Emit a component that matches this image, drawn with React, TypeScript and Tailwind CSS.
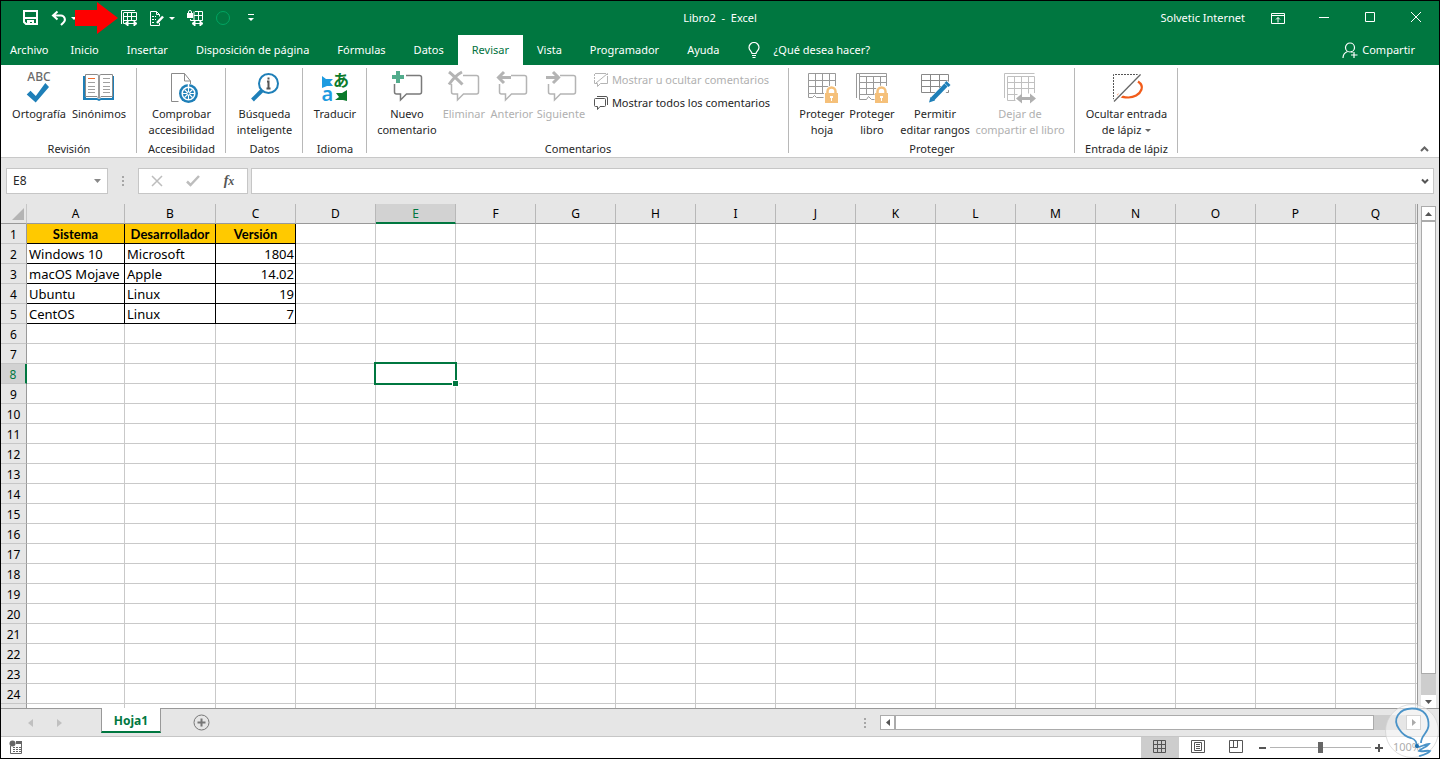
import React, { useState } from "react";

const tabs = ["Inicio", "Insertar", "Disposición de página", "Fórmulas", "Datos", "Revisar", "Vista", "Programador", "Ayuda"];

const columns = "ABCDEFGHIJKLMNOPQR".split("");
const rowCount = 25;

const sheet: string[][] = [
  ["Sistema", "Desarrollador", "Versión"],
  ["Windows 10", "Microsoft", "1804"],
  ["macOS Mojave", "Apple", "14.02"],
  ["Ubuntu", "Linux", "19"],
  ["CentOS", "Linux", "7"],
];

type IconProps = { children: React.ReactNode; className?: string; box?: string };

const Svg = ({ children, className = "w-4 h-4", box = "0 0 16 16" }: IconProps) => (
  <svg className={`shrink-0 ${className}`} viewBox={box} fill="none" aria-hidden="true">
    {children}
  </svg>
);

const Big = ({ children }: { children: React.ReactNode }) => (
  <Svg className="w-8 h-8 overflow-visible" box="0 0 32 32">{children}</Svg>
);

const Caret = ({ className = "" }: { className?: string }) => (
  <Svg className={`w-[6px] h-[3px] ${className}`} box="0 0 6 3">
    <path d="M0 0h6L3 3z" fill="currentColor" />
  </Svg>
);

/* ── Ribbon icons ── */

const SpellIcon = () => (
  <Big>
    <text x="16" y="9" textAnchor="middle" fontSize="12" fontWeight="500" fill="#6a6a6a" fontFamily="Noto Sans, sans-serif">ABC</text>
    <path d="M3.700 22.500 7.500 18.700 12.800 24 22.300 11 26 15 12.700 30.500z" fill="#1e7fb8" />
  </Big>
);

const ThesaurusIcon = () => (
  <Big>
    <path d="M0 4h3v22h11l2 1 2-1h11V4h2v24H18l-2 1-2-1H0z" fill="#1e7fb8" />
    <path d="M2.500 2.500H14l2 1 2-1h11.500v22H18l-2 2-2-2H2.500z" fill="#fff" stroke="#8a8a8a" />
    <path d="M16 4v22" stroke="#9a9a9a" strokeWidth="2" />
    <path d="M5 6.500h7" stroke="#f06a2a" />
    <path d="M5 10.500h7M5 14.500h7M5 17.500h7M5 20.500h7M20 6.500h7M20 10.500h7M20 14.500h7M20 17.500h7M20 20.500h7" stroke="#a0a0a0" />
  </Big>
);

const AccessibilityIcon = () => (
  <Big>
    <path d="M12.500 29.500h-7v-28h13l6 7.500v3M18.500 1.500V9h6" stroke="#8a8a8a" />
    <circle cx="22.500" cy="21.500" r="9.500" fill="#1e7fb8" />
    <circle cx="22.500" cy="21.500" r="6.300" stroke="#fff" strokeWidth="1.500" />
    <path d="M22.500 16v12M16.500 21.500h12M18.500 17.500l8 8M26.500 17.500l-8 8" stroke="#fff" strokeWidth="1.100" />
    <path d="M22.500 12v3" stroke="#fff" strokeWidth="1.500" />
    <circle cx="22.500" cy="21.500" r="1.500" fill="#1e7fb8" stroke="#fff" />
  </Big>
);

const LookupIcon = () => (
  <Big>
    <path d="M3.500 28 13 18.500" stroke="#1e7fb8" strokeWidth="4" />
    <circle cx="19.500" cy="11.500" r="9.500" fill="#fff" stroke="#1e7fb8" strokeWidth="2" />
    <path d="M19.500 5.500v2M18 9.500h1.500v7M17.500 16.500h4" stroke="#555" strokeWidth="2" />
  </Big>
);

const TranslateIcon = () => (
  <Big>
    <path d="M3 4l4 3h7l-3 3 3 4H8l-5 2z" fill="#1e9be0" />
    <path d="M28 29l-4-1h-8l4-3-3-4h6l5-3z" fill="#0b7a2b" />
    <text x="14" y="14" fontSize="16" fontWeight="700" fill="#0b7a2b" fontFamily="Noto Sans CJK JP, sans-serif">あ</text>
    <text x="2.500" y="29" fontSize="20" fontWeight="600" fill="#1e9be0" fontFamily="Noto Sans, sans-serif">a</text>
  </Big>
);

const Bubble = ({ stroke }: { stroke: string }) => (
  <path d="M15 3.500h13.500a2 2 0 0 1 2 2V20a2 2 0 0 1-2 2H15.500l-6 6v-6H5.500a2 2 0 0 1-2-2V12" stroke={stroke} strokeWidth="1.500" />
);

const NewCommentIcon = () => (
  <Big>
    <Bubble stroke="#7a7a7a" />
    <path d="M5 -1h4v4h4v4H9v4H5V7H1V3h4z" fill="#52ac8c" />
  </Big>
);

const DeleteCommentIcon = () => (
  <Big>
    <Bubble stroke="#b4b4b4" />
    <path d="M1 0C5 3 10 8 14.500 12.500M14 0C8 3 4 8 1 12.500" stroke="#b4b4b4" strokeWidth="3" />
  </Big>
);

const PrevCommentIcon = () => (
  <Big>
    <Bubble stroke="#b4b4b4" />
    <path d="M2 5.500h13M8 0 2.500 5.500 8 11" stroke="#b4b4b4" strokeWidth="3" />
  </Big>
);

const NextCommentIcon = () => (
  <Big>
    <Bubble stroke="#b4b4b4" />
    <path d="M1 5.500h13M8 0l5.500 5.500L8 11" stroke="#b4b4b4" strokeWidth="3" />
  </Big>
);

const Lock = () => (
  <>
    <path d="M21.500 22v-2a4 4 0 0 1 8 0v2" stroke="#fff" strokeWidth="5" />
    <path d="M21.500 23v-3.500a4 4 0 0 1 8 0V23" stroke="#f5c07a" strokeWidth="2.500" />
    <path d="M19 21h13v10H19z" fill="#f5c07a" />
    <path d="M24 24h3v2h-1v3h-1v-3h-1z" fill="#fff" />
  </>
);

const ProtectSheetIcon = () => (
  <Big>
    <path d="M18 21.500H2.500v-20h27V14M2.500 8.500h27M2.500 14.500h20M9.500 1.500v20M16.500 1.500v20M23.500 1.500V14M2.500 21.500v4h4l2-2 2 2h7" stroke="#999" />
    <Lock />
  </Big>
);

const ProtectBookIcon = () => (
  <Big>
    <path d="M.500 26V1.500M3.500 1.500h27V14M.500 1.500h3M3.500 4.500h27M3.500 10.500h27M3.500 16.500h18M3.500 22.500h15M3.500 1.500v26h7l2-3 3 3h3M10.500 4.500v18M17.500 4.500v18M24.500 4.500v10" stroke="#999" />
    <Lock />
  </Big>
);

const EditRangesIcon = () => (
  <Big>
    <path d="M2.500 2.500h27v18h-27zM2.500 8.500h27M2.500 14.500h27M11.500 2.500v18M20.500 2.500v18" stroke="#888" />
    <path d="M12 30 31 11" stroke="#fff" strokeWidth="8" />
    <path d="M13.500 27 27 13" stroke="#1e7fb8" strokeWidth="4.500" />
    <path d="M27.500 9l4 4-2 2-4-4z" fill="#1e7fb8" />
    <path d="M11.500 25 10 30.500l6-2z" fill="#1e7fb8" />
  </Big>
);

const UnshareIcon = () => (
  <Big>
    <path d="M.500 26V1.500h30M3.500 4.500h27V21M3.500 10.500h27M3.500 16.500h27M3.500 22.500h10M3.500 4.500v24h8M10.500 4.500v24M17.500 4.500v18M24.500 4.500v17" stroke="#c0c0c0" />
    <path d="M12 26.500l6-5v3.500h8v-3.500l6 5-6 5V28h-8v3.500z" fill="#b0b0b0" />
  </Big>
);

const InkIcon = () => (
  <Big>
    <path d="M2.500 28V2.500h27" stroke="#555" strokeDasharray="2 1" />
    <path d="M27 9.500c3 2 4.500 5 3.500 8-2 5.500-8 8-13 8-4.500 0-8-1-11-3" stroke="#f25c1a" strokeWidth="2.200" />
    <path d="M29.500 2.500 3 29.500" stroke="#fff" strokeWidth="4" />
    <path d="M29.500 2.500 3 29.500" stroke="#666" strokeWidth="1.300" />
  </Big>
);

/* ── Ribbon building blocks ── */

type RibbonButtonProps = {
  icon: React.ReactNode;
  lines: string[];
  width: string;
  disabled?: boolean;
  caret?: boolean;
};

const RibbonButton = ({ icon, lines, width, disabled, caret }: RibbonButtonProps) => (
  <button type="button" disabled={disabled}
    className={`flex flex-col items-center leading-4 whitespace-nowrap ${width} ${disabled ? "text-[#b0b0b0]" : "text-[#262626]"}`}>
    {icon}
    <span className="mt-0.5">{lines[0]}</span>
    {lines[1] && (
      <span className="flex items-center gap-1">
        {lines[1]}
        {caret && <Caret className="text-[#666]" />}
      </span>
    )}
  </button>
);

const Group = ({ label, width, children }: { label: string; width: string; children: React.ReactNode }) => (
  <section aria-label={label} className={`relative flex flex-col justify-between shrink-0 ${width}`}>
    <div className="flex items-start justify-center">{children}</div>
    <h2 className="text-center leading-4 text-[#262626]">{label}</h2>
    <div className="absolute right-0 -top-1 bottom-1 w-px bg-[#b8b8b8]" />
  </section>
);

const TitleBar = () => (
  <div className="relative grid grid-cols-[1fr_auto_1fr] items-center h-[34px]">
    <div className="flex items-center gap-3 pl-[22px]">
      <button type="button" aria-label="Guardar">
        <Svg>
          <path d="M1 1h13v13H3l-2-2z" stroke="#fff" strokeWidth="2" />
          <path d="M2 7h11v2H2zM4 10h7v4H9v-2H7v2H4z" fill="#fff" />
        </Svg>
      </button>
      <div className="relative flex items-center gap-1">
        <button type="button" aria-label="Deshacer">
          <Svg>
            <path d="M6.500 1.500 2 5.500l4.500 4M2.500 5.500H10a4 4 0 0 1 2.500 7L10 15" stroke="#fff" strokeWidth="2" />
          </Svg>
        </button>
        <Caret />
        <svg className="absolute left-6 -top-2 w-[43px] h-8" viewBox="0 0 43 32" aria-hidden="true">
          <path d="M0 8h22V0l21 16-21 16v-8H0z" fill="#fe0000" />
        </svg>
      </div>
      <button type="button" aria-label="Dejar de compartir el libro" className="ml-8">
        <Svg>
          <path d="M.500 14V.500H14M3 2.500h12.500v8M2.500 2.500v11H4M3 6.500h12M3 10.500h12M6.500 2.500v8M10.500 2.500v8" stroke="#fff" />
          <path d="M4 13.500l3-2.500v5zM16 13.500 13 11v5zM6 13.500h8" fill="#fff" stroke="#fff" />
        </Svg>
      </button>
      <div className="flex items-center gap-1">
        <button type="button" aria-label="Permitir editar rangos">
          <Svg>
            <path d="M10.500 13v2.500h-9v-14h6l3 3v2M7.500 1.500v3h3" stroke="#fff" />
            <path d="M3 6.500h4M3 9.500h4M3 12.500h3" stroke="#fff" strokeDasharray="2 1" />
            <path d="M8 13 14 6.500" stroke="#fff" strokeWidth="2.500" />
          </Svg>
        </button>
        <Caret />
      </div>
      <button type="button" aria-label="Proteger y compartir">
        <Svg>
          <path d="M8 1.500h7.500v9H3.500V9M7 5.500h8M7 1.500v9M11.500 1.500v9" stroke="#fff" />
          <path d="M0 3h6v5H0z" fill="#fff" />
          <path d="M1.500 3.500V2a1.500 1.500 0 0 1 3 0v1.500" stroke="#fff" />
          <path d="M5 13.500l3-2.500v5zM16 13.500 13 11v5zM7 13.500h7" fill="#fff" stroke="#fff" />
        </Svg>
      </button>
      <button type="button" aria-label="Grabar macro">
        <Svg><circle cx="8" cy="8" r="6.500" stroke="#00a562" /></Svg>
      </button>
      <button type="button" aria-label="Personalizar barra" className="ml-1">
        <Svg className="w-2 h-2" box="0 0 8 8">
          <path d="M1 .500h6" stroke="#fff" />
          <path d="M1 4h6L4 7z" fill="#fff" />
        </Svg>
      </button>
    </div>
    <h1>Libro2&nbsp; - &nbsp;Excel</h1>
    <div className="flex items-center justify-end h-full">
      <button type="button" className="mr-2.5 whitespace-nowrap">Solvetic Internet</button>
      <button type="button" aria-label="Opciones de la cinta" className="flex justify-center w-[46px]">
        <Svg className="w-[14px] h-[11px]" box="0 0 14 11">
          <path d="M.500.500h13v10H.500zM.500 2.500h13M7 9.500v-5M5 6.500l2-2 2 2" stroke="#fff" />
        </Svg>
      </button>
      <button type="button" aria-label="Minimizar" className="flex justify-center w-[46px]">
        <Svg className="w-[10px] h-[11px]" box="0 0 10 11"><path d="M0 4.500h10" stroke="#fff" /></Svg>
      </button>
      <button type="button" aria-label="Maximizar" className="flex justify-center w-[46px]">
        <Svg className="w-[10px] h-[12px]" box="0 0 10 12"><path d="M.500.500h9v9h-9z" stroke="#fff" /></Svg>
      </button>
      <button type="button" aria-label="Cerrar" className="flex justify-center w-[46px]">
        <Svg className="w-[10px] h-[12px]" box="0 0 10 12"><path d="M0 0l10 10M10 0 0 10" stroke="#fff" /></Svg>
      </button>
    </div>
  </div>
);

const TabBar = ({ active, onSelect }: { active: string; onSelect: (t: string) => void }) => (
  <nav className="flex items-stretch h-[30px]">
    <button type="button" className="pl-[9px] pr-2">Archivo</button>
    {tabs.map((t) => (
      <button key={t} type="button" onClick={() => onSelect(t)}
        className={`px-[14px] whitespace-nowrap ${t === active ? "bg-white text-[#00723e]" : ""}`}>
        {t}
      </button>
    ))}
    <button type="button" className="flex items-center gap-[14px] pl-[14px]">
      <Svg className="w-3 h-4" box="0 0 12 16">
        <path d="M4 11.500c0-2-3-3-3-6a5 5 0 0 1 10 0c0 3-3 4-3 6zM4 13.500h4M4.500 15.500h3" stroke="#fff" strokeWidth="1.200" />
      </Svg>
      ¿Qué desea hacer?
    </button>
    <button type="button" className="flex items-center gap-1 ml-auto pr-6">
      <Svg>
        <circle cx="8" cy="5.500" r="4.500" stroke="#fff" strokeWidth="1.200" />
        <path d="M1 16c0-3 2-5.500 4.500-6.500M9 9.500l1.500 1M12 10v6M9 13h6.500" stroke="#fff" strokeWidth="1.200" />
      </Svg>
      Compartir
    </button>
  </nav>
);

const Ribbon = () => (
  <div className="flex h-[93px] pt-[7px] border-b border-[#c8c8c8] bg-white">
    <Group label="Revisión" width="w-[136px]">
      <RibbonButton icon={<SpellIcon />} lines={["Ortografía"]} width="w-[60px]" />
      <RibbonButton icon={<ThesaurusIcon />} lines={["Sinónimos"]} width="w-[60px]" />
    </Group>
    <Group label="Accesibilidad" width="w-[89px]">
      <RibbonButton icon={<AccessibilityIcon />} lines={["Comprobar", "accesibilidad"]} width="w-[72px]" />
    </Group>
    <Group label="Datos" width="w-[77px]">
      <RibbonButton icon={<LookupIcon />} lines={["Búsqueda", "inteligente"]} width="w-[60px]" />
    </Group>
    <Group label="Idioma" width="w-[64px]">
      <RibbonButton icon={<TranslateIcon />} lines={["Traducir"]} width="w-[50px]" />
    </Group>
    <Group label="Comentarios" width="w-[422px]">
      <RibbonButton icon={<NewCommentIcon />} lines={["Nuevo", "comentario"]} width="w-[66px]" />
      <RibbonButton icon={<DeleteCommentIcon />} lines={["Eliminar"]} width="w-12" disabled />
      <RibbonButton icon={<PrevCommentIcon />} lines={["Anterior"]} width="w-12" disabled />
      <RibbonButton icon={<NextCommentIcon />} lines={["Siguiente"]} width="w-[50px]" disabled />
      <div className="flex flex-col gap-[7px] pl-2 pr-3">
        <button type="button" disabled className="flex items-center gap-1 leading-4 text-[#b0b0b0] whitespace-nowrap">
          <Svg className="w-[14px] h-[14px]" box="0 0 14 14">
            <path d="M.500 9V.500h13v3M3 .500h8" stroke="#b4b4b4" strokeDasharray="2 1" />
            <path d="M13.500 3v7.500h-7l-3 3v-3h-3V9M2 10 13 1" stroke="#b4b4b4" />
          </Svg>
          Mostrar u ocultar comentarios
        </button>
        <button type="button" className="flex items-center gap-1 leading-4 text-[#262626] whitespace-nowrap">
          <Svg className="w-[14px] h-[14px]" box="0 0 14 14">
            <path d="M2 2.500h8.500a1 1 0 0 1 1 1v6a1 1 0 0 1-1 1H6l-2.500 3v-3H1.500a1 1 0 0 1-1-1v-6a1 1 0 0 1 1-1zM3 .500h9a1.500 1.500 0 0 1 1.500 1.500v7" stroke="#555" />
          </Svg>
          Mostrar todos los comentarios
        </button>
      </div>
    </Group>
    <Group label="Proteger" width="w-[286px]">
      <RibbonButton icon={<ProtectSheetIcon />} lines={["Proteger", "hoja"]} width="w-[50px]" />
      <RibbonButton icon={<ProtectBookIcon />} lines={["Proteger", "libro"]} width="w-[50px]" />
      <RibbonButton icon={<EditRangesIcon />} lines={["Permitir", "editar rangos"]} width="w-[76px]" />
      <RibbonButton icon={<UnshareIcon />} lines={["Dejar de", "compartir el libro"]} width="w-[94px]" disabled />
    </Group>
    <Group label="Entrada de lápiz" width="w-[103px]">
      <RibbonButton icon={<InkIcon />} lines={["Ocultar entrada", "de lápiz"]} width="w-[90px]" caret />
    </Group>
    <button type="button" aria-label="Contraer la cinta" className="ml-auto self-end pr-2.5 pb-1">
      <Svg className="w-[9px] h-[8px]" box="0 0 9 8">
        <path d="M1 6l3.500-3.500L8 6" stroke="#666" strokeWidth="2" />
      </Svg>
    </button>
  </div>
);

const FormulaBar = () => (
  <div className="flex items-stretch h-[46px] py-2.5 px-[5px]">
    <div className="flex items-center w-[102px] border border-[#c6c6c6] bg-white">
      <input aria-label="Cuadro de nombres" defaultValue="E8" className="min-w-0 flex-1 pl-1.5 text-[12px] outline-none" />
      <button type="button" aria-label="Ver nombres" className="pr-1.5">
        <Svg className="w-[7px] h-[4px]" box="0 0 7 4"><path d="M0 0h7L3.500 4z" fill="#888" /></Svg>
      </button>
    </div>
    <Svg className="w-[2px] h-[10px] mx-[14px] self-center" box="0 0 2 10">
      <path d="M0 0h2v2H0zM0 4h2v2H0zM0 8h2v2H0z" fill="#a6a6a6" />
    </Svg>
    <div className="flex items-center w-[110px] border border-[#c6c6c6] bg-white">
      <button type="button" aria-label="Cancelar" className="flex flex-1 justify-center">
        <Svg className="w-[12px] h-[12px]" box="0 0 12 12"><path d="M1 1l10 10M11 1 1 11" stroke="#bdbdbd" strokeWidth="1.500" /></Svg>
      </button>
      <button type="button" aria-label="Introducir" className="flex flex-1 justify-center">
        <Svg className="w-[14px] h-[12px]" box="0 0 14 12"><path d="M1 6.500 4.500 10 13 1" stroke="#bdbdbd" strokeWidth="2.500" /></Svg>
      </button>
      <button type="button" aria-label="Insertar función" className="flex-1 font-['Liberation_Serif',serif] italic font-bold text-[14px] leading-4 text-[#555]">
        f<span className="text-[12px]">x</span>
      </button>
    </div>
    <div className="flex items-center flex-1 ml-[3px] border border-[#c6c6c6] bg-white">
      <input aria-label="Barra de fórmulas" className="min-w-0 flex-1 px-1.5 outline-none" />
      <button type="button" aria-label="Expandir barra de fórmulas" className="pr-1">
        <Svg className="w-[8px] h-[7px]" box="0 0 8 7"><path d="M1 1.500 4 4.500l3-3" stroke="#555" strokeWidth="2" /></Svg>
      </button>
    </div>
  </div>
);

const Grid = () => (
  <div className="min-w-0 flex-1 overflow-hidden border-r border-[#999]">
    <table className="table-fixed w-max border-separate border-spacing-0 text-black">
      <colgroup>
        <col className="w-[26px]" />
        {columns.map((c) => (
          <col key={c} className={c === "A" ? "w-[98px]" : c === "B" ? "w-[91px]" : "w-[80px]"} />
        ))}
      </colgroup>
      <thead>
        <tr className="h-5">
          <th className="h-5 p-0 border-r border-b border-r-[#c6c6c6] border-b-[#999]">
            <svg className="ml-auto mr-[2px] w-3 h-3" viewBox="0 0 12 12" aria-label="Seleccionar todo">
              <path d="M12 0v12H0z" fill="#b4b4b4" />
            </svg>
          </th>
          {columns.map((c) => (
            <th key={c} scope="col"
              className={`h-5 p-0 pt-px align-top border-r border-r-[#b8b8b8] text-[12px] leading-[17px] font-normal ${c === "E" ? "bg-[#d2d2d2] text-[#007740] border-b-2 border-b-[#007740]" : "border-b border-b-[#999]"}`}>
              {c}
            </th>
          ))}
        </tr>
      </thead>
      <tbody>
        {Array.from({ length: rowCount }, (_, r) => (
          <tr key={r} className="h-5">
            <th scope="row"
              className={`h-5 p-0 pt-0.5 align-top border-b border-b-[#c6c6c6] text-[12px] leading-[17px] font-normal ${r === 7 ? "bg-[#d2d2d2] text-[#007740] border-r-2 border-r-[#007740]" : "border-r border-r-[#999] bg-[#e6e6e6]"}`}>
              {r + 1}
            </th>
            {columns.map((c, i) => {
              const value = sheet[r]?.[i];
              const selected = r === 7 && c === "E";
              const filled = value !== undefined;
              const head = filled && r === 0;
              return (
                <td key={c}
                  className={`relative h-5 p-0 pt-0.5 align-top border-r border-b text-[13px] leading-[17px] whitespace-nowrap ${filled ? "border-black" : "border-[#c9c9c9]"} ${head ? "bg-[#ffc900] text-center font-['Lato',sans-serif] font-bold" : "bg-white"} ${r > 0 && i === 2 ? "text-right pr-px" : r > 0 ? "pl-0.5" : ""}`}>
                  {value}
                  {selected && (
                    <>
                      <div className="absolute -inset-0.5 z-10 border-2 border-[#007740]" />
                      <div className="absolute -right-1 -bottom-1 z-10 w-[7px] h-[7px] border border-white bg-[#007740]" />
                    </>
                  )}
                </td>
              );
            })}
          </tr>
        ))}
      </tbody>
    </table>
  </div>
);

const scrollBtn = "flex items-center justify-center shrink-0 border border-[#ababab] bg-white text-[#555]";

const VerticalScroll = () => (
  <div className="flex flex-col w-[15px] mx-[3px] pt-0.5 bg-[#e6e6e6]">
    <button type="button" aria-label="Subir" className={`${scrollBtn} h-[15px]`}>
      <Svg className="w-[7px] h-[4px]" box="0 0 7 4"><path d="M0 4h7L3.500 0z" fill="currentColor" /></Svg>
    </button>
    <div className="flex-1 border border-[#ababab] bg-white" />
    <div className="h-[21px] bg-[#cdcdcd]" />
    <button type="button" aria-label="Bajar" className="flex items-center justify-center h-[13px] bg-white text-[#555]">
      <Svg className="w-[7px] h-[4px]" box="0 0 7 4"><path d="M0 0h7L3.500 4z" fill="currentColor" /></Svg>
    </button>
  </div>
);

const SheetTabs = () => (
  <div className="flex items-center h-7 border-t border-[#999] shrink-0">
    <div className="flex items-center gap-6 w-[100px] pl-[27px] text-[#c0c0c0]">
      <button type="button" aria-label="Hoja anterior">
        <Svg className="w-[5px] h-[8px]" box="0 0 5 8"><path d="M5 0v8L0 4z" fill="currentColor" /></Svg>
      </button>
      <button type="button" aria-label="Hoja siguiente">
        <Svg className="w-[5px] h-[8px]" box="0 0 5 8"><path d="M0 0v8l5-4z" fill="currentColor" /></Svg>
      </button>
    </div>
    <button type="button" className="self-start -mt-px h-[25px] w-[60px] pt-0.5 border-x border-x-[#999] border-b-2 border-b-[#007740] bg-white text-[12px] font-bold text-[#007740]">
      Hoja1
    </button>
    <button type="button" aria-label="Hoja nueva" className="ml-8">
      <Svg className="w-[17px] h-[17px]" box="0 0 17 17">
        <circle cx="8.500" cy="8.500" r="7.500" stroke="#777" />
        <path d="M8.500 4.500v8M4.500 8.500h8" stroke="#777" strokeWidth="2" />
      </Svg>
    </button>
    <div className="flex items-stretch ml-auto w-[557px] h-[15px] mr-[18px]">
      <Svg className="w-[2px] h-[10px] mr-[14px] self-center" box="0 0 2 10">
        <path d="M0 0h2v2H0zM0 4h2v2H0zM0 8h2v2H0z" fill="#a6a6a6" />
      </Svg>
      <button type="button" aria-label="Desplazar a la izquierda" className={`${scrollBtn} w-[15px]`}>
        <Svg className="w-[4px] h-[7px]" box="0 0 4 7"><path d="M4 0v7L0 3.500z" fill="currentColor" /></Svg>
      </button>
      <div className="flex-1 border border-[#ababab] bg-white" />
      <div className="w-8 bg-[#cdcdcd]" />
      <button type="button" aria-label="Desplazar a la derecha" className={`${scrollBtn} w-[15px]`}>
        <Svg className="w-[4px] h-[7px]" box="0 0 4 7"><path d="M0 0v7l4-3.500z" fill="currentColor" /></Svg>
      </button>
    </div>
  </div>
);

const StatusBar = ({ zoom, onZoom }: { zoom: number; onZoom: (z: number) => void }) => (
  <div className="flex items-center h-[22px] border-t border-[#c6c6c6] bg-white shrink-0">
    <button type="button" aria-label="Grabar macro" className="pl-2 pb-0.5">
      <Svg className="w-[14px] h-[14px]" box="0 0 14 14">
        <path d="M1.500 6v7.500h11V3" stroke="#666" />
        <path d="M7 1h6v3H7z" fill="#666" />
        <circle cx="3.500" cy="3.500" r="3" fill="#666" />
        <path d="M4 7.500h8M4 9.500h8M4 11.500h8" stroke="#666" strokeDasharray="2 1" />
      </Svg>
    </button>
    <div className="flex items-center h-full ml-auto text-[#555]">
      <button type="button" aria-label="Normal" className="flex items-center justify-center w-[38px] h-full pb-0.5 bg-[#cdcdcd]">
        <Svg className="w-[13px] h-[13px]" box="0 0 13 13"><path d="M.500.500h12v12H.500zM.500 4.500h12M.500 8.500h12M4.500.500v12M8.500.500v12" stroke="#555" /></Svg>
      </button>
      <button type="button" aria-label="Diseño de página" className="flex items-center justify-center w-[38px] h-full pb-0.5">
        <Svg className="w-[14px] h-[13px]" box="0 0 14 13"><path d="M.500.500h13v12H.500zM3.500 2.500h7v8h-7zM5 4.500h4M5 6.500h4M5 8.500h4" stroke="#555" /></Svg>
      </button>
      <button type="button" aria-label="Vista previa de salto de página" className="flex items-center justify-center w-[38px] h-full pb-0.5">
        <Svg className="w-[14px] h-[13px]" box="0 0 14 13"><path d="M.500.500h13v12H.500zM4.500.500v7M8.500.500v7M.500 7.500h8" stroke="#555" /></Svg>
      </button>
      <button type="button" aria-label="Alejar" className="ml-1" onClick={() => onZoom(Math.max(0, zoom - 10))}>
        <Svg className="w-[7px] h-[8px]" box="0 0 7 8"><path d="M0 4h7" stroke="#555" strokeWidth="2" /></Svg>
      </button>
      <input type="range" aria-label="Zoom" min={0} max={200} value={zoom}
        onChange={(e) => onZoom(Number(e.target.value))}
        className="appearance-none w-[101px] h-3 mx-1 bg-transparent bg-[linear-gradient(#b4b4b4,#b4b4b4)] bg-[length:100%_1px] bg-center bg-no-repeat [&::-webkit-slider-thumb]:appearance-none [&::-webkit-slider-thumb]:w-[5px] [&::-webkit-slider-thumb]:h-[11px] [&::-webkit-slider-thumb]:bg-[#666]" />
      <button type="button" aria-label="Acercar" onClick={() => onZoom(Math.min(200, zoom + 10))}>
        <Svg className="w-[8px] h-[8px]" box="0 0 8 8"><path d="M0 4h8M4 0v8" stroke="#555" strokeWidth="2" /></Svg>
      </button>
      <span className="pl-2.5 pr-[18px]">{zoom}%</span>
    </div>
  </div>
);

export default function App() {
  const [active, setActive] = useState("Revisar");
  const [zoom, setZoom] = useState(100);

  return (
    <div className="relative h-screen min-h-80 overflow-hidden flex flex-col border border-black bg-[#e6e6e6] font-['Noto_Sans','Noto_Sans_CJK_JP',sans-serif] text-[11px] text-[#262626]">
      <header className="shrink-0 bg-[#007740] text-white">
        <TitleBar />
        <TabBar active={active} onSelect={setActive} />
      </header>
      <Ribbon />
      <FormulaBar />
      <div className="flex flex-1 min-h-0">
        <Grid />
        <VerticalScroll />
      </div>
      <SheetTabs />
      <StatusBar zoom={zoom} onZoom={setZoom} />

      {/* translucent logo over the corner */}
      <svg className="absolute right-0 bottom-0 w-[54px] h-[54px] pointer-events-none" viewBox="0 0 54 54" fill="none" aria-hidden="true">
        <circle cx="27" cy="27" r="26.500" fill="#fff" fillOpacity="0.500" stroke="#d0d0d0" strokeOpacity="0.700" />
        <path d="M31 43c2-4-1-8-5-9-5-1-8-3-12-9C7 15 14 4.500 27 4.500S44 13 43.500 22C43 29 36 31 36 39" stroke="#4a93c8" strokeWidth="1.800" />
        <path d="M31 43c4 1 8-3 13-3-3 4-8 4-10 7 4 1 8-1 11 0-2 3-7 4-11 5" stroke="#4a93c8" strokeWidth="1.800" />
        <circle cx="32" cy="42" r="2" fill="#1e6fb0" />
      </svg>
    </div>
  );
}
